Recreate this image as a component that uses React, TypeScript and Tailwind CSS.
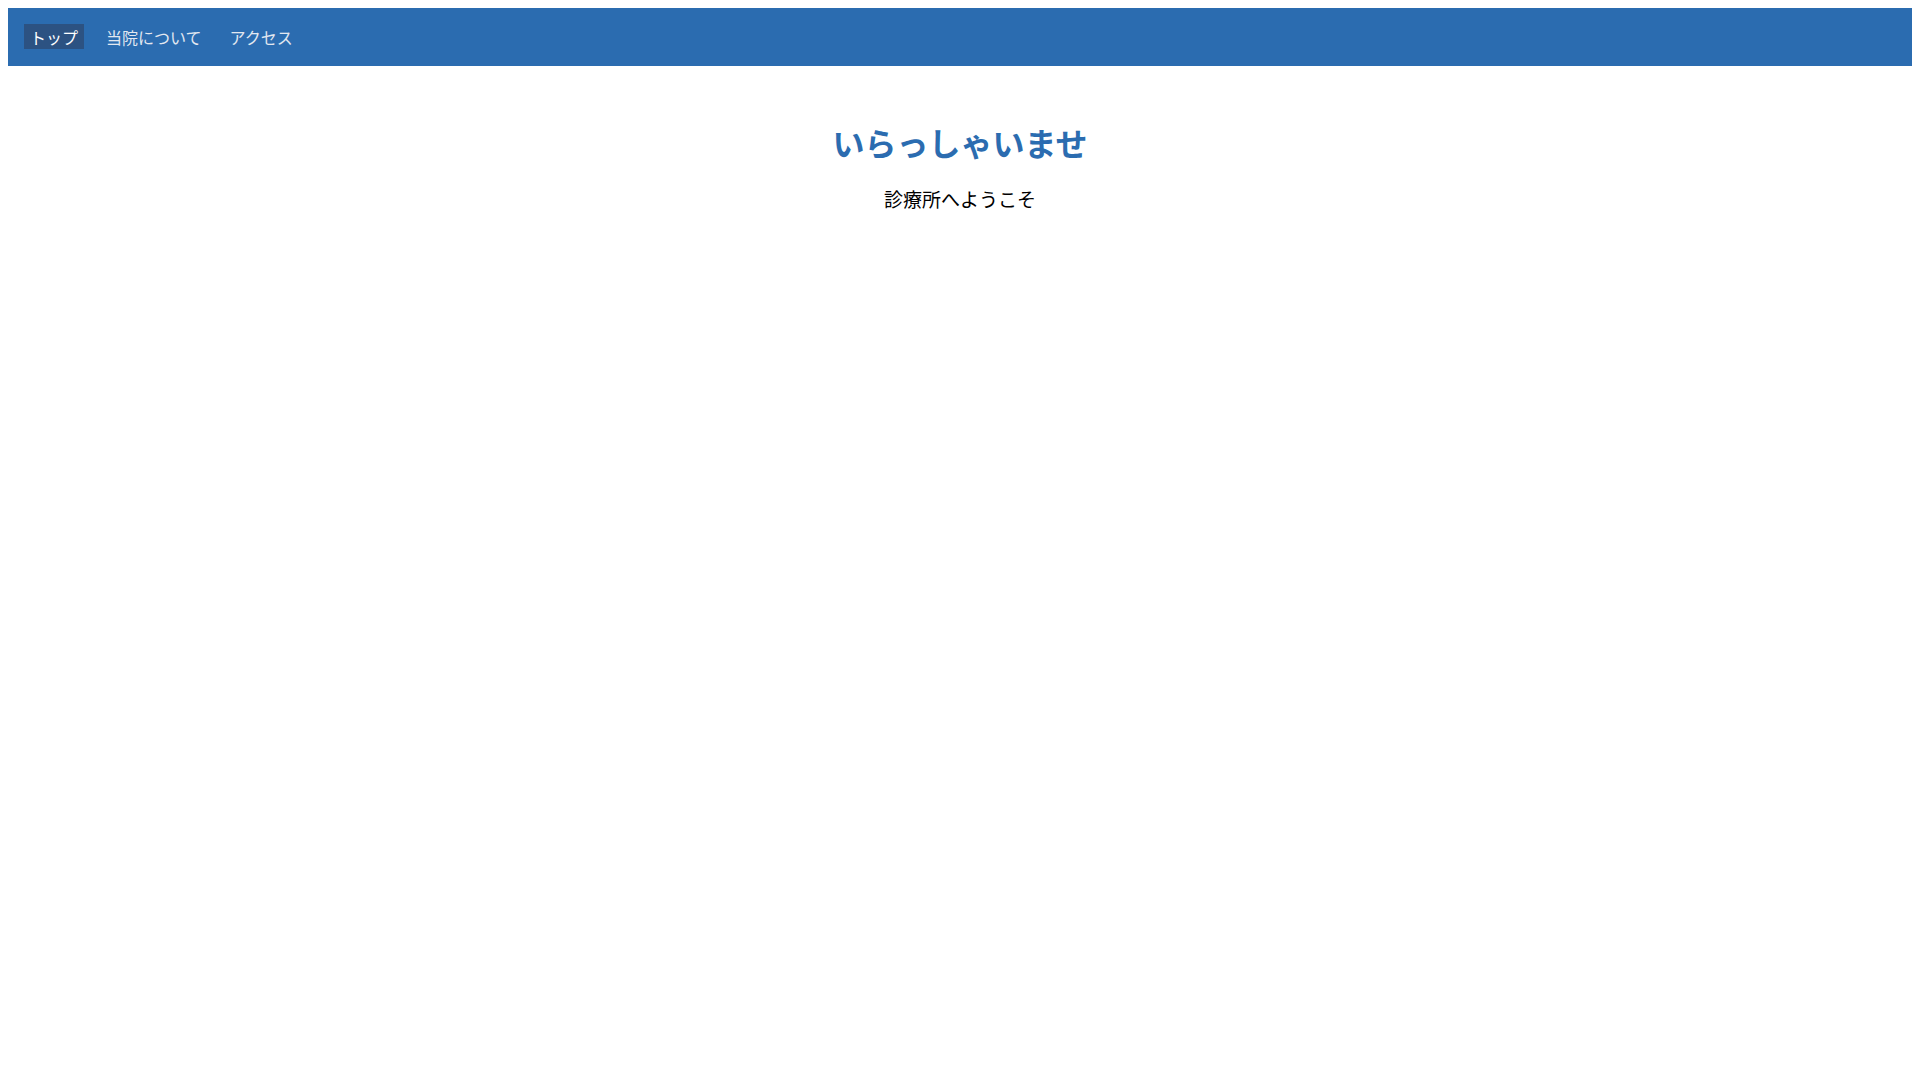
import React from "react";

export default function App() {
  const font = { fontFamily: '"Noto Sans CJK JP", "Noto Sans", sans-serif' };
  return (
    <div className="min-h-screen bg-white p-2" style={font}>
      <nav className="h-[58px] bg-[#2b6cb0] px-4 pt-4">
        <ul className="flex gap-4">
          <li className="h-[25px] bg-[#2c5282] px-[6px] pt-[1px] text-[16px] leading-[24px] text-white">トップ</li>
          <li className="h-[25px] px-[6px] pt-[1px] text-[16px] leading-[24px] text-[#e2e8f0]">当院について</li>
          <li className="h-[25px] px-[6px] pt-[1px] text-[16px] leading-[24px] text-[#e2e8f0]">アクセス</li>
        </ul>
      </nav>
      <main className="flex flex-col items-center pt-[52px]">
        <h1 className="text-[32px] font-bold leading-[48px] text-[#2b6cb0]">いらっしゃいませ</h1>
        <p className="mt-[19px] text-[19px] leading-[28px] text-black">診療所へようこそ</p>
      </main>
    </div>
  );
}
